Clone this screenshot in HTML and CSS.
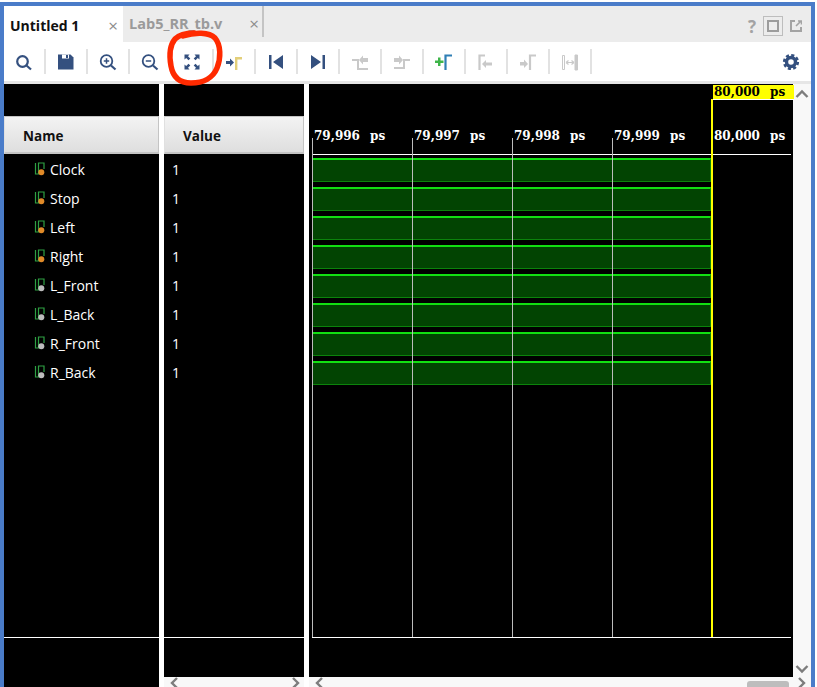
FILE: index.html
```html
<!DOCTYPE html>
<html lang="en">

<head>
    <meta charset="UTF-8">
    <meta name="viewport" content="width=device-width, initial-scale=1.0">
    <title>Untitled 1</title>
    <link rel="stylesheet" href="styles.css">
</head>

<body>
    <div class="window">
        <div class="tabbar">
            <div class="tab active">
                <span class="tab-title">Untitled 1</span>
                <span class="tab-close">&#215;</span>
            </div>
            <div class="tab">
                <span class="tab-title">Lab5_RR_tb.v</span>
                <span class="tab-close">&#215;</span>
            </div>
            <div class="tab-actions">
                <span class="help">?</span>
                <span class="maximize"><span></span></span>
                <svg class="popout" width="12" height="12" viewBox="0 0 12 12" fill="none" stroke="#a3a3a3" stroke-width="2">
                    <path d="M5 1H1v10h10V7" />
                    <path d="M6 6l5-5M8 1h3.500v3.500" stroke-width="1.600" />
                </svg>
            </div>
        </div>

        <div class="toolbar">
            <button class="tool"><svg width="20" height="20" viewBox="0 0 20 20" fill="none" stroke="#34507f" stroke-width="2.200"><circle cx="8.500" cy="9.500" r="5.300" /><path d="M12.500 13.500l4.500 4" /></svg></button>
            <button class="tool"><svg width="20" height="20" viewBox="0 0 20 20"><path d="M2 2.500h12.500l3 3v12H2z" fill="#34507f" /><path d="M6 2.500h7v4H6z" fill="#fff" /><path d="M10 3h2v3h-2z" fill="#34507f" /></svg></button>
            <button class="tool"><svg width="20" height="20" viewBox="0 0 20 20" fill="none" stroke="#34507f" stroke-width="1.800"><circle cx="8.500" cy="9" r="5.800" /><path d="M13 13.500l4.500 4" stroke-width="2.200" /><path d="M5.800 9h5.400M8.500 6.300v5.400" stroke-width="1.500" /></svg></button>
            <button class="tool"><svg width="20" height="20" viewBox="0 0 20 20" fill="none" stroke="#34507f" stroke-width="1.800"><circle cx="8.500" cy="9" r="5.800" /><path d="M13 13.500l4.500 4" stroke-width="2.200" /><path d="M5.800 9h5.400" stroke-width="1.500" /></svg></button>
            <button class="tool"><svg width="20" height="20" viewBox="0 0 20 20" fill="#34507f" stroke="none"><path d="M2.500 2.500h5L6 4.200l2.300 2.300-1.800 1.800L4.200 6 2.500 7.500z" /><path d="M17.500 2.500h-5L14 4.200l-2.300 2.300 1.800 1.800L15.800 6l1.700 1.500z" /><path d="M2.500 17.500h5L6 15.800l2.300-2.300-1.800-1.800L4.200 14l-1.700-1.500z" /><path d="M17.500 17.500h-5l1.500-1.700-2.300-2.300 1.800-1.800 2.300 2.300 1.700-1.500z" /></svg></button>
            <button class="tool"><svg width="20" height="20" viewBox="0 0 20 20"><path d="M2 9h4V6.500l4 4-4 4V12H2z" fill="#34507f" /><path d="M12.200 18V6.200H18" fill="none" stroke="#e3cf7a" stroke-width="2.400" /></svg></button>
            <button class="tool"><svg width="20" height="20" viewBox="0 0 20 20" fill="#34507f"><path d="M3 3h2.500v14H3zM17 3v14L7 10z" /></svg></button>
            <button class="tool"><svg width="20" height="20" viewBox="0 0 20 20" fill="#34507f"><path d="M14.500 3H17v14h-2.500zM3 3v14l10-7z" /></svg></button>
            <button class="tool"><svg width="20" height="20" viewBox="0 0 20 20" fill="#c9c9c9"><path d="M2 7h7v9h9v2H7V9H2z" /><path d="M18 6v4h-5v2.500L9 8l4-4.500V6z" /></svg></button>
            <button class="tool"><svg width="20" height="20" viewBox="0 0 20 20" fill="#c9c9c9"><path d="M2 6h5V3.500L11 8l-4 4.500V10H2z" /><path d="M2 15h9V7h7v2h-5v8H2z" /></svg></button>
            <button class="tool"><svg width="20" height="20" viewBox="0 0 20 20"><path d="M1 8.500h3V5.500h2.500v3h3V11h-3v3H4v-3H1z" fill="#3fb54a" /><path d="M11.500 18V3.500H18" fill="none" stroke="#2f7fb5" stroke-width="2.200" /></svg></button>
            <button class="tool"><svg width="20" height="20" viewBox="0 0 20 20" fill="none" stroke="#c9c9c9" stroke-width="2.200"><path d="M3.500 18V3.500H9" /><path d="M6 12l4-4v2.500h6v3h-6V16z" fill="#c9c9c9" stroke="none" /></svg></button>
            <button class="tool"><svg width="20" height="20" viewBox="0 0 20 20" fill="none" stroke="#c9c9c9" stroke-width="2.200"><path d="M2 10h4V7.500l4 4.500-4 4v-2.500H2z" fill="#c9c9c9" stroke="none" /><path d="M12 18V3.500h6" /></svg></button>
            <button class="tool"><svg width="20" height="20" viewBox="0 0 20 20" fill="none" stroke="#c9c9c9"><path d="M2.500 3.500h2v14h-2z" /><path d="M15 3h2.500v15H15z" fill="#c9c9c9" /><path d="M6 10.500h8M6 10.500l2.500-2M6 10.500l2.500 2M14 10.500l-2.500-2M14 10.500l-2.500 2" stroke-width="1.200" /></svg></button>
            <button class="tool settings"><svg width="20" height="20" viewBox="0 0 20 20" fill="none" stroke="#34507f"><circle cx="10" cy="10" r="4.500" stroke-width="3.400" /><circle cx="10" cy="10" r="6.800" stroke-width="2.600" stroke-dasharray="3.100 2.240" /></svg></button>
        </div>

        <div class="panels">
            <div class="panel names">
                <div class="panel-top"></div>
                <div class="col-head">Name</div>
                <div class="rows">
                    <div class="row"><svg class="sig" width="13" height="14" viewBox="0 0 13 14"><path d="M1.500 1v11h3V1h5.500v6" fill="none" stroke="#2ea043" stroke-width="1.200" /><circle cx="7.300" cy="10.300" r="3" fill="#e08a28" /></svg>Clock</div>
                    <div class="row"><svg class="sig" width="13" height="14" viewBox="0 0 13 14"><path d="M1.500 1v11h3V1h5.500v6" fill="none" stroke="#2ea043" stroke-width="1.200" /><circle cx="7.300" cy="10.300" r="3" fill="#e08a28" /></svg>Stop</div>
                    <div class="row"><svg class="sig" width="13" height="14" viewBox="0 0 13 14"><path d="M1.500 1v11h3V1h5.500v6" fill="none" stroke="#2ea043" stroke-width="1.200" /><circle cx="7.300" cy="10.300" r="3" fill="#e08a28" /></svg>Left</div>
                    <div class="row"><svg class="sig" width="13" height="14" viewBox="0 0 13 14"><path d="M1.500 1v11h3V1h5.500v6" fill="none" stroke="#2ea043" stroke-width="1.200" /><circle cx="7.300" cy="10.300" r="3" fill="#e08a28" /></svg>Right</div>
                    <div class="row"><svg class="sig" width="13" height="14" viewBox="0 0 13 14"><path d="M1.500 1v11h3V1h5.500v6" fill="none" stroke="#2ea043" stroke-width="1.200" /><circle cx="7.300" cy="10.300" r="3" fill="#bdbdbd" /></svg>L_Front</div>
                    <div class="row"><svg class="sig" width="13" height="14" viewBox="0 0 13 14"><path d="M1.500 1v11h3V1h5.500v6" fill="none" stroke="#2ea043" stroke-width="1.200" /><circle cx="7.300" cy="10.300" r="3" fill="#bdbdbd" /></svg>L_Back</div>
                    <div class="row"><svg class="sig" width="13" height="14" viewBox="0 0 13 14"><path d="M1.500 1v11h3V1h5.500v6" fill="none" stroke="#2ea043" stroke-width="1.200" /><circle cx="7.300" cy="10.300" r="3" fill="#bdbdbd" /></svg>R_Front</div>
                    <div class="row"><svg class="sig" width="13" height="14" viewBox="0 0 13 14"><path d="M1.500 1v11h3V1h5.500v6" fill="none" stroke="#2ea043" stroke-width="1.200" /><circle cx="7.300" cy="10.300" r="3" fill="#bdbdbd" /></svg>R_Back</div>
                </div>
                <div class="panel-foot"></div>
            </div>

            <div class="panel values">
                <div class="panel-top"></div>
                <div class="col-head">Value</div>
                <div class="rows">
                    <div class="row">1</div>
                    <div class="row">1</div>
                    <div class="row">1</div>
                    <div class="row">1</div>
                    <div class="row">1</div>
                    <div class="row">1</div>
                    <div class="row">1</div>
                    <div class="row">1</div>
                </div>
                <div class="panel-foot"></div>
                <div class="hscroll">
                    <svg width="10" height="10" viewBox="0 0 10 10"><path d="M7 1L2 6l5 5" class="chev" /></svg>
                    <svg width="10" height="10" viewBox="0 0 10 10"><path d="M3 1l5 5-5 5" class="chev" /></svg>
                </div>
            </div>

            <div class="wave-area">
                <div class="wave-main">
                    <div class="wave">
                        <div class="cursor-bar"><span class="cursor-label">80,000 ps</span></div>
                        <div class="ruler">
                            <span>79,996 ps</span>
                            <span>79,997 ps</span>
                            <span>79,998 ps</span>
                            <span>79,999 ps</span>
                            <span>80,000 ps</span>
                        </div>
                        <div class="traces">
                            <div class="trace"></div>
                            <div class="trace"></div>
                            <div class="trace"></div>
                            <div class="trace"></div>
                            <div class="trace"></div>
                            <div class="trace"></div>
                            <div class="trace"></div>
                            <div class="trace"></div>
                        </div>
                        <div class="wave-foot"></div>
                        <i class="grid-line first"></i>
                        <i class="grid-line second"></i>
                        <i class="grid-line third"></i>
                        <i class="grid-line fourth"></i>
                        <i class="cursor-line"></i>
                    </div>
                    <div class="vscroll">
                        <svg width="14" height="10" viewBox="0 0 14 10"><path d="M1.500 8L7 2.500 12.500 8" class="chev" /></svg>
                        <svg width="14" height="10" viewBox="0 0 14 10"><path d="M1.500 2L7 7.500 12.500 2" class="chev" /></svg>
                    </div>
                </div>
                <div class="hscroll wave-scroll">
                    <svg width="10" height="10" viewBox="0 0 10 10"><path d="M7 1L2 6l5 5" class="chev" /></svg>
                    <span class="thumb"></span>
                    <svg width="10" height="10" viewBox="0 0 10 10"><path d="M3 1l5 5-5 5" class="chev" /></svg>
                </div>
            </div>
        </div>
    </div>

    <!-- hand drawn red ring over the fit button -->
    <svg class="scribble" width="817" height="687" viewBox="0 0 817 687" fill="none">
        <path d="M183 36C195 32 209 32 215 38C221 45 221 58 217 68C213 78 203 83 191 83C180 83 173 77 171 66C169 55 170 45 175 39C179 35 186 33 194 33" stroke="#ff2a00" stroke-width="5.500" stroke-linecap="round" />
    </svg>
</body>

</html>
```

FILE: styles.css
```css
* {
    box-sizing: border-box;
}

html,
body {
    height: 100%;
}

body {
    margin: 0;
    padding: 2px 2px 0 0;
    background-color: #fff;
    overflow: hidden;
    font-family: 'Open Sans', 'Noto Sans', sans-serif;
    font-size: 14px;
}

.window {
    height: 685px;
    border: 4px solid #4a7cc9;
    border-bottom: none;
    display: flex;
    flex-direction: column;
    background-color: #fff;
}

/* tabs */
.tabbar {
    height: 36px;
    flex: none;
    display: flex;
    background-color: #ececec;
}

.tab {
    width: 119px;
    display: flex;
    align-items: center;
    justify-content: space-between;
    padding: 2px 5px 0 6px;
    color: #9a9a9a;
    font-weight: bold;
    font-size: 14px;
}

.tab.active {
    background-color: #fff;
    color: #111;
}

.tab:nth-child(2) {
    width: 141px;
    border-right: 2px solid #c4c4c4;
    height: 31px;
    padding: 4px 3px 0 6px;
    margin-bottom: 5px;
    font-size: 14.500px;
}

.tab-close {
    color: #8c8c8c;
    font-weight: normal;
    font-size: 17px;
}

.tab-actions {
    margin-left: auto;
    display: flex;
    align-items: center;
    gap: 7px;
    padding: 4px 9px 0 0;
}

.help {
    color: #a3a3a3;
    font-weight: bold;
    font-size: 17px;
}

.maximize {
    width: 20px;
    height: 20px;
    border: 1px solid #bdbdbd;
    display: flex;
    align-items: center;
    justify-content: center;
}

.maximize span {
    width: 12px;
    height: 12px;
    border: 2px solid #9c9c9c;
}

/* toolbar */
.toolbar {
    height: 39px;
    flex: none;
    display: flex;
    align-items: center;
}

.tool {
    width: 42px;
    height: 25px;
    margin: 0;
    padding: 0;
    border: none;
    border-right: 2px solid #e2e2e2;
    background: none;
    display: flex;
    align-items: center;
    justify-content: center;
}

.tool svg {
    display: block;
}

.settings {
    margin-left: auto;
    width: 40px;
    border-right: none;
}

/* panels */
.panels {
    flex: 1;
    display: flex;
    gap: 5px;
    min-height: 0;
    border-top: 3px solid #e6e6e6;
}

.panel {
    display: flex;
    flex-direction: column;
    background-color: #000;
    color: #fff;
}

.names {
    width: 155px;
}

.values {
    width: 140px;
}

.panel-top {
    height: 32px;
    flex: none;
}

.col-head {
    height: 38px;
    flex: none;
    padding: 2px 0 0 18px;
    display: flex;
    align-items: center;
    background: linear-gradient(#f3f3f3, #dedede);
    border: 1px solid #c4c4c4;
    border-left-color: #e0e0e0;
    border-bottom-width: 2px;
    color: #111;
    font-weight: bold;
    font-size: 13.500px;
}

.rows {
    height: 483px;
    flex: none;
    padding-top: 1px;
}

.row {
    height: 29px;
    display: flex;
    align-items: center;
    padding-left: 30px;
    gap: 3px;
}

.values .row {
    padding-left: 8px;
}

.sig {
    display: block;
    margin-top: -2px;
}

.panel-foot {
    flex: 1;
    border-top: 1px solid #fff;
}

.hscroll {
    height: 10px;
    flex: none;
    display: flex;
    align-items: flex-start;
    justify-content: space-between;
    padding: 0 4px 0 6px;
    background-color: #f8f8f8;
    overflow: hidden;
}

.chev {
    fill: none;
    stroke: #7d7d7d;
    stroke-width: 2.400;
}

/* waveform */
.wave-area {
    flex: 1;
    display: flex;
    flex-direction: column;
    min-width: 0;
}

.wave-main {
    flex: 1;
    display: flex;
    min-height: 0;
}

.wave {
    position: relative;
    width: 484px;
    display: flex;
    flex-direction: column;
    background-color: #000;
    padding-left: 3px;
    font: bold 12px/14px 'DejaVu Serif', serif;
    word-spacing: 6px;
}

.cursor-bar {
    height: 15px;
    flex: none;
    margin-top: 1px;
    padding-left: 401px;
}

.cursor-label {
    display: block;
    width: 81px;
    height: 15px;
    padding-left: 1px;
    border-bottom: 1px solid #fff;
    background-color: #ff0;
    color: #000;
}

.ruler {
    height: 40px;
    width: 479px;
    margin-top: 15px;
    flex: none;
    display: flex;
    color: #fff;
    border-bottom: 1px solid #fff;
}

.ruler span {
    width: 100px;
    flex: none;
    padding-left: 2px;
    padding-top: 14px;
}

.traces {
    height: 483px;
    flex: none;
    width: 479px;
    border-bottom: 1px solid #fff;
    padding-top: 3px;
}

.trace {
    width: 399px;
    height: 24px;
    margin-bottom: 5px;
    background-color: #024402;
    border: 1px solid #0b830b;
    border-top: 2px solid #12e012;
}

.wave-foot {
    flex: 1;
}

.grid-line {
    position: absolute;
    top: 54px;
    width: 1px;
    height: 499px;
    background-color: #bcbcbc;
}

.grid-line.first {
    left: 3px;
}

.grid-line.second {
    left: 103px;
}

.grid-line.third {
    left: 203px;
}

.grid-line.fourth {
    left: 303px;
}

.cursor-line {
    position: absolute;
    top: 15px;
    left: 402px;
    width: 2px;
    height: 538px;
    background-color: #ff0;
}

.vscroll {
    flex: 1;
    display: flex;
    flex-direction: column;
    align-items: center;
    justify-content: space-between;
    padding: 5px 0 3px;
    background-color: #f8f8f8;
}

.wave-scroll {
    padding: 0 5px 0 6px;
}

.thumb {
    width: 42px;
    height: 6px;
    margin: 4px 7px 0 auto;
    border-radius: 3px 3px 0 0;
    background-color: #bdbdbd;
}

.scribble {
    position: absolute;
    top: 0;
    left: 0;
    pointer-events: none;
}
```
